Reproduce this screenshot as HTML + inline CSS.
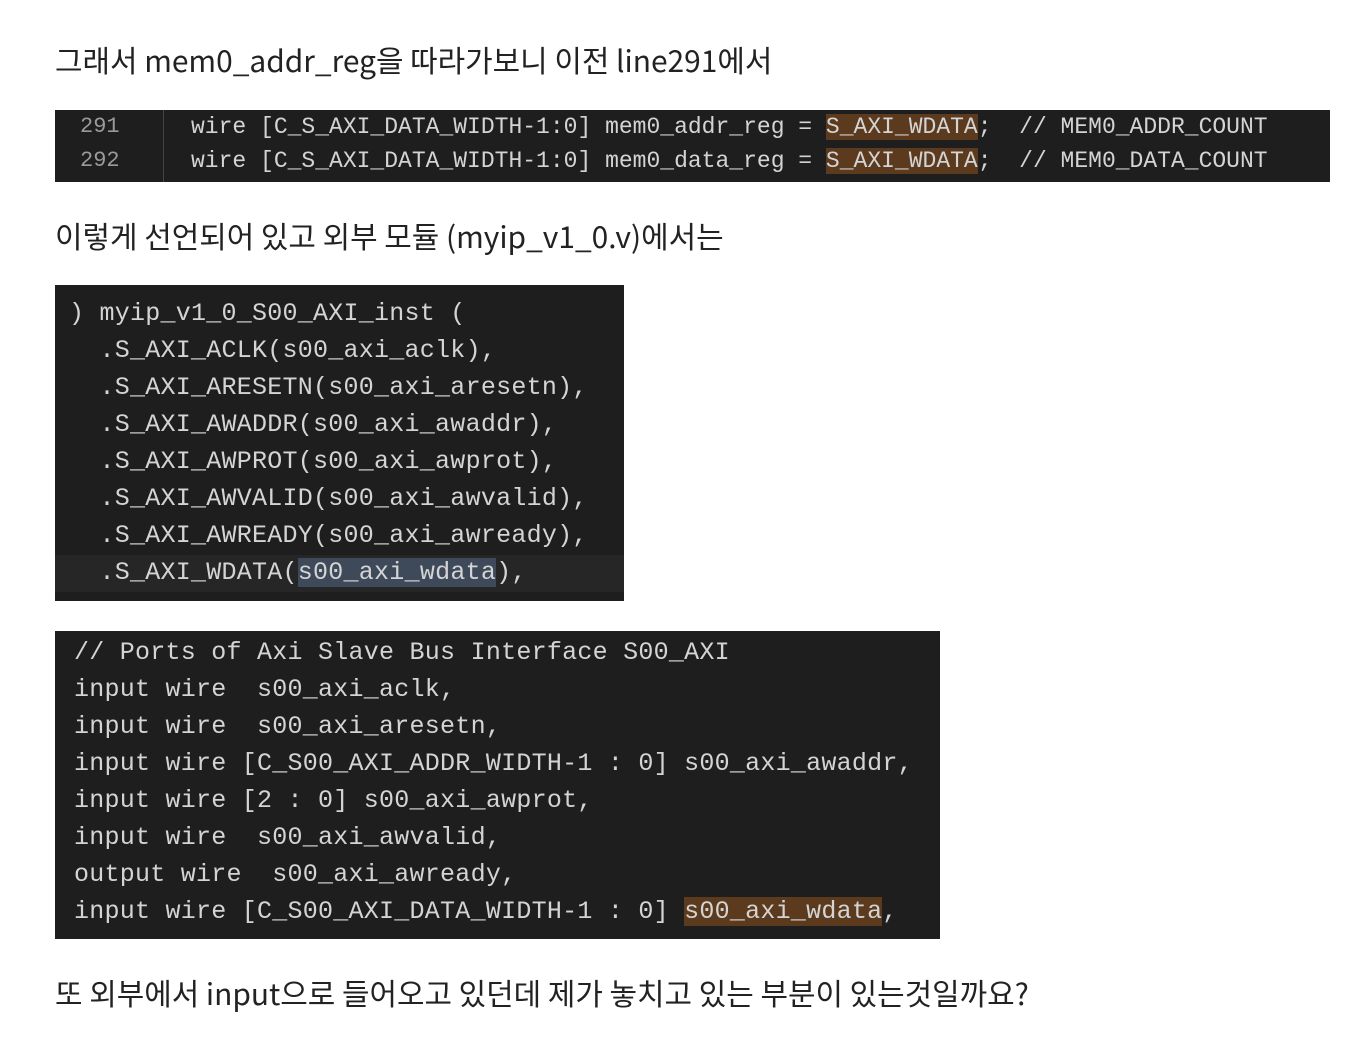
<!DOCTYPE html>
<html><head><meta charset="utf-8"><style>
body{margin:0;background:#fff;width:1366px;height:1046px;position:relative;overflow:hidden;font-family:"Noto Sans CJK KR","Liberation Sans",sans-serif;color:#222}
.t{position:absolute;left:55px;font-size:29.9px;line-height:38px;white-space:nowrap}
.box{position:absolute;background:#1e1e1e;overflow:hidden}
.c{position:absolute;font-family:"Liberation Mono",monospace;color:#d4d4d4;white-space:pre;}
.hl{background:#5b3a1e}
.sel{background:#3e4a5a}
</style></head><body>
<div class="t" style="top:40px">그래서 mem0_addr_reg을 따라가보니 이전 line291에서</div>
<div class="box" style="left:55px;top:110px;width:1275px;height:72px">
 <div style="position:absolute;left:108px;top:0;width:1px;height:72px;background:#444"></div>
 <div class="c" style="left:25px;top:0px;font-size:22px;line-height:34px;color:#9a9a9a">291
292</div>
 <div class="c" style="left:136px;top:0px;font-size:23px;line-height:34px">wire [C_S_AXI_DATA_WIDTH-1:0] mem0_addr_reg = <span class="hl">S_AXI_WDATA</span>;  // MEM0_ADDR_COUNT
wire [C_S_AXI_DATA_WIDTH-1:0] mem0_data_reg = <span class="hl">S_AXI_WDATA</span>;  // MEM0_DATA_COUNT</div>
</div>
<div class="t" style="top:216px">이렇게 선언되어 있고 외부 모듈 (myip_v1_0.v)에서는</div>
<div class="box" style="left:55px;top:285px;width:569px;height:316px">
 <div style="position:absolute;left:0;top:270px;width:569px;height:37px;background:#262626"></div>
 <div class="c" style="left:14px;top:10px;font-size:25px;line-height:37px;letter-spacing:0.25px">) myip_v1_0_S00_AXI_inst (
  .S_AXI_ACLK(s00_axi_aclk),
  .S_AXI_ARESETN(s00_axi_aresetn),
  .S_AXI_AWADDR(s00_axi_awaddr),
  .S_AXI_AWPROT(s00_axi_awprot),
  .S_AXI_AWVALID(s00_axi_awvalid),
  .S_AXI_AWREADY(s00_axi_awready),
  .S_AXI_WDATA(<span class="sel">s00_axi_wdata</span>),</div>
</div>
<div class="box" style="left:55px;top:631px;width:885px;height:308px">
 <div class="c" style="left:19px;top:3px;font-size:25px;line-height:37px;letter-spacing:0.25px">// Ports of Axi Slave Bus Interface S00_AXI
input wire  s00_axi_aclk,
input wire  s00_axi_aresetn,
input wire [C_S00_AXI_ADDR_WIDTH-1 : 0] s00_axi_awaddr,
input wire [2 : 0] s00_axi_awprot,
input wire  s00_axi_awvalid,
output wire  s00_axi_awready,
input wire [C_S00_AXI_DATA_WIDTH-1 : 0] <span class="hl">s00_axi_wdata</span>,</div>
</div>
<div class="t" style="top:973px">또 외부에서 input으로 들어오고 있던데 제가 놓치고 있는 부분이 있는것일까요?</div>
</body></html>
